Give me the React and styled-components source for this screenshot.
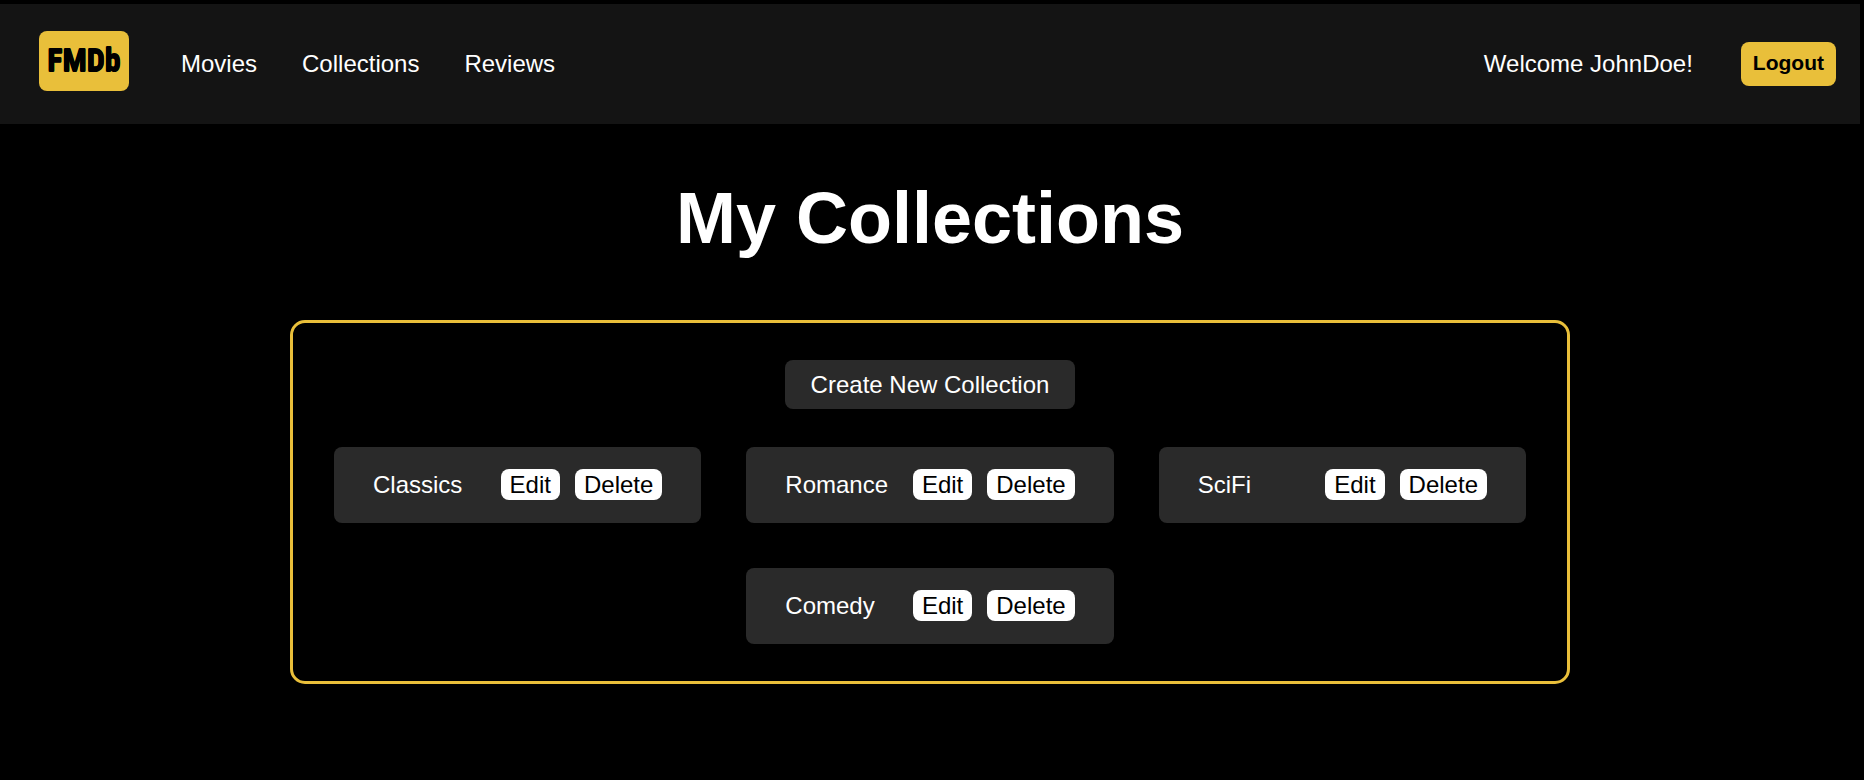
import React from "react";
import styled, { createGlobalStyle } from "styled-components";

const gold = "#e9bf3a";

const GlobalStyle = createGlobalStyle`
  *, *::before, *::after {
    box-sizing: border-box;
  }
  body {
    margin: 0;
    background: #000;
    color: #fff;
    font-family: "Liberation Sans", Helvetica, Arial, sans-serif;
    font-size: 24px;
    line-height: 27px;
  }
  button {
    border: 0;
    font: inherit;
    cursor: pointer;
  }
`;

const Page = styled.div`
  padding: 4px 4px 0 0;
`;

const NavBar = styled.header`
  display: flex;
  align-items: center;
  justify-content: space-between;
  padding: 27px 24px 27px 39px;
  background: #141414;
  line-height: 28px;
`;

const NavGroup = styled.div`
  display: flex;
  align-items: center;
  gap: 52px;
`;

const Logo = styled.a`
  display: flex;
  align-items: center;
  justify-content: center;
  width: 90px;
  height: 60px;
  margin-bottom: 6px;
  padding-bottom: 3px;
  border-radius: 8px;
  background: ${gold};
  color: #000;
  font-family: "Liberation Sans Narrow", "Roboto Condensed", "Open Sans Condensed", "Liberation Sans", sans-serif;
  font-size: 32px;
  font-weight: 700;
  line-height: 36px;
  text-decoration: none;
  text-shadow: 0 -1px #000, 0 1px #000;
  -webkit-text-stroke: 1px #000;
`;

const NavLinks = styled.nav`
  display: flex;
  gap: 45px;
`;

const NavLink = styled.a`
  color: #fff;
  text-decoration: none;
`;

const Account = styled.div`
  display: flex;
  align-items: center;
  gap: 48px;
`;

const LogoutButton = styled.button`
  padding: 9px 12px 11px;
  border-radius: 8px;
  background: ${gold};
  color: #000;
  && {
    font-size: 21px;
    font-weight: 700;
    line-height: 24px;
  }
`;

const Main = styled.main`
  padding: 52px 24px;
`;

const Title = styled.h1`
  margin: 0 0 60px;
  font-size: 72px;
  line-height: 84px;
  text-align: center;
`;

const Panel = styled.section`
  display: flex;
  flex-direction: column;
  align-items: center;
  gap: 38px;
  max-width: 1280px;
  margin: 0 auto;
  padding: 37px 41px;
  border: 3px solid ${gold};
  border-radius: 15px;
`;

const CreateButton = styled.button`
  padding: 11px 26px;
  border-radius: 8px;
  background: #2a2a2a;
  color: #fff;
`;

const CollectionList = styled.ul`
  display: flex;
  flex-wrap: wrap;
  align-self: stretch;
  justify-content: center;
  gap: 45px;
  margin: 0;
  padding: 0;
  list-style: none;
`;

const CollectionCard = styled.li`
  display: flex;
  align-items: center;
  justify-content: space-between;
  flex: 0 0 calc((100% - 90px) / 3);
  min-width: 340px;
  padding: 22px 39px 23px;
  border-radius: 8px;
  background: #2a2a2a;
`;

const Actions = styled.div`
  display: flex;
  gap: 15px;
`;

const ActionButton = styled.button`
  padding: 2px 9px;
  border-radius: 8px;
  background: #fff;
  color: #000;
`;

const links = ["Movies", "Collections", "Reviews"];
const collections = ["Classics", "Romance", "SciFi", "Comedy"];

export default function App() {
  return (
    <>
      <GlobalStyle />
      <Page>
        <NavBar>
          <NavGroup>
            <Logo href="#home">FMDb</Logo>
            <NavLinks>
              {links.map((label) => (
                <NavLink key={label} href={`#${label.toLowerCase()}`}>
                  {label}
                </NavLink>
              ))}
            </NavLinks>
          </NavGroup>
          <Account>
            <span>Welcome JohnDoe!</span>
            <LogoutButton type="button">Logout</LogoutButton>
          </Account>
        </NavBar>
        <Main>
          <Title>My Collections</Title>
          <Panel>
            <CreateButton type="button">Create New Collection</CreateButton>
            <CollectionList>
              {collections.map((name) => (
                <CollectionCard key={name}>
                  <span>{name}</span>
                  <Actions>
                    <ActionButton type="button" aria-label={`Edit ${name}`}>Edit</ActionButton>
                    <ActionButton type="button" aria-label={`Delete ${name}`}>Delete</ActionButton>
                  </Actions>
                </CollectionCard>
              ))}
            </CollectionList>
          </Panel>
        </Main>
      </Page>
    </>
  );
}
